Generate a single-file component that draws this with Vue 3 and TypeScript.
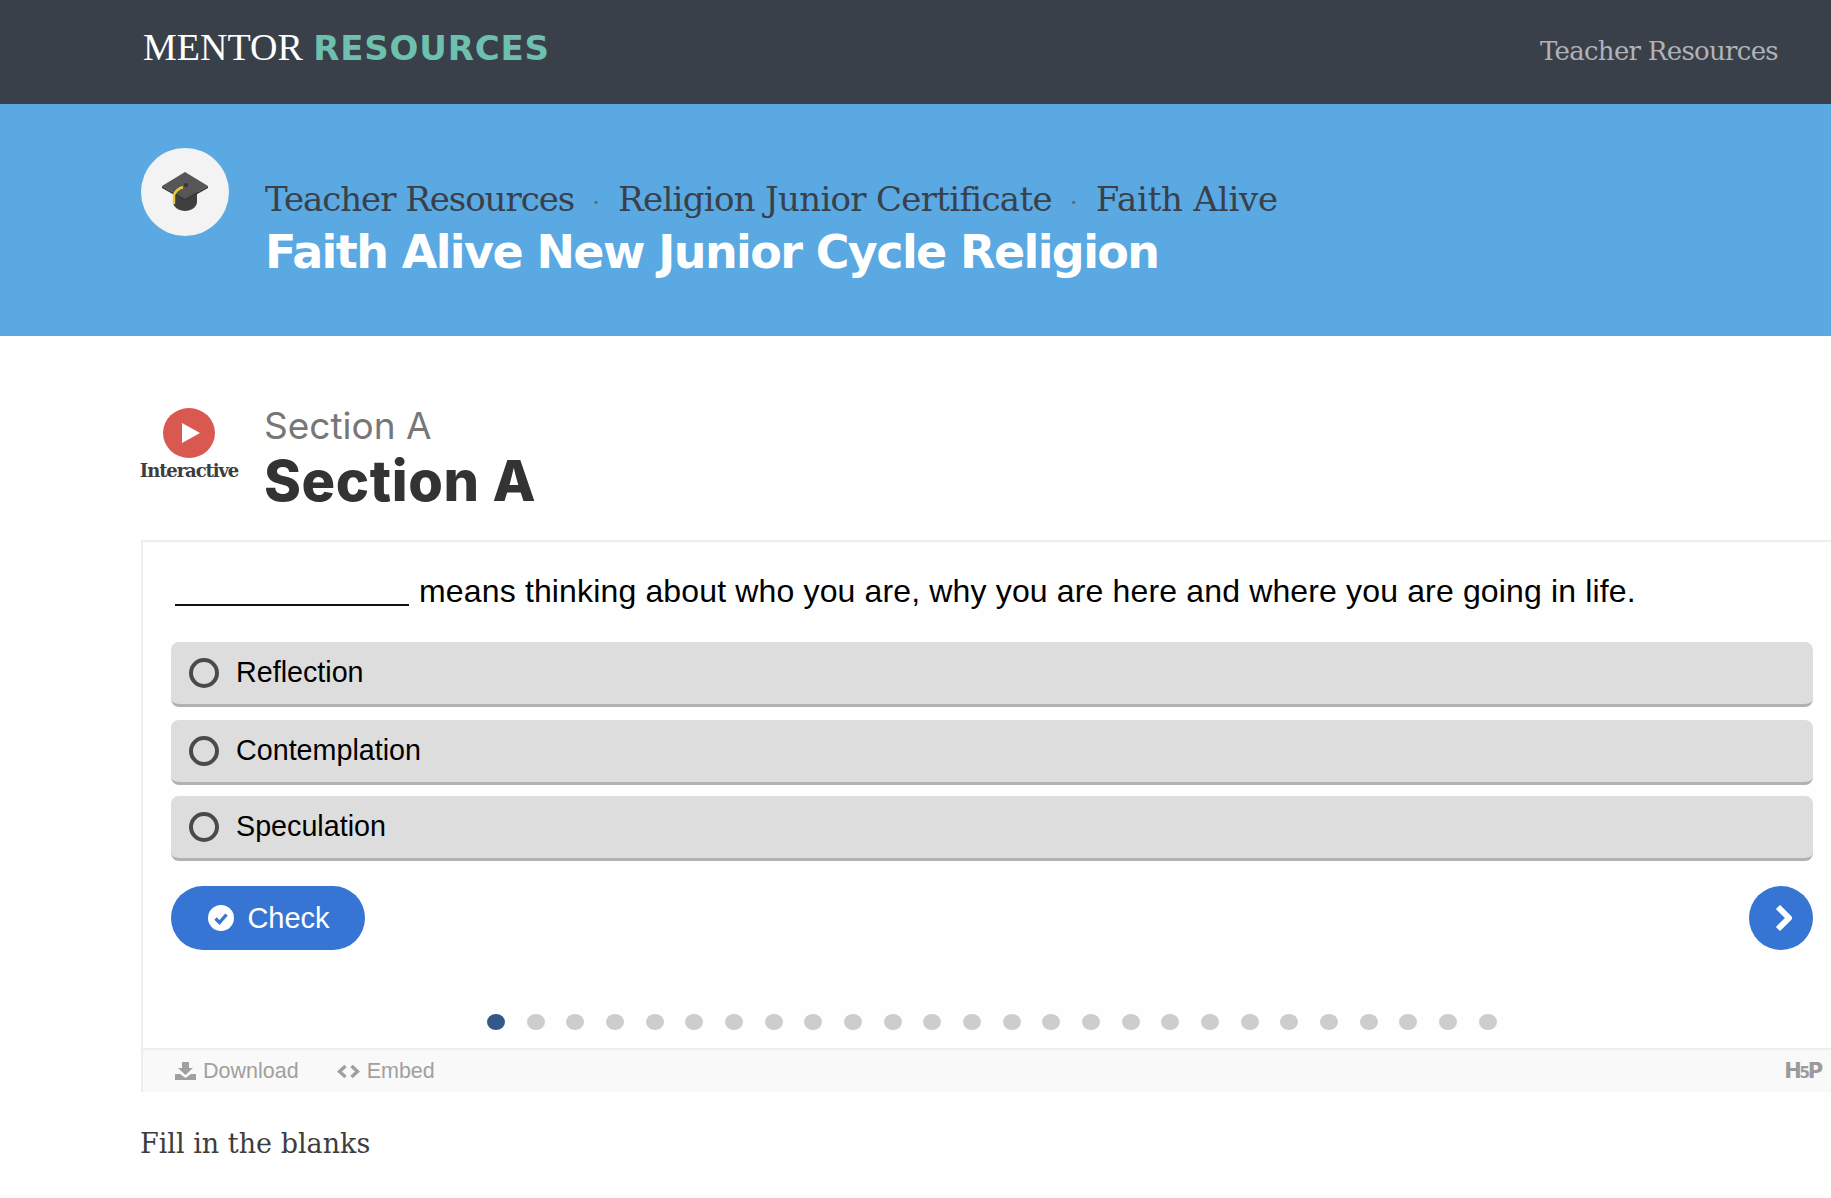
<script setup lang="ts">
const options: string[] = ['Reflection', 'Contemplation', 'Speculation']
const dots: number[] = Array.from({ length: 26 }, (_, i) => i)
</script>

<template>
  <div class="page">
    <header class="top">
      <div class="logo"><span class="mentor">MENTOR</span> <span class="res">RESOURCES</span></div>
      <a class="toplink">Teacher Resources</a>
    </header>
    <section class="hero">
      <div class="cap">
        <svg width="48" height="40" viewBox="0 0 48 40">
          <path d="M12 17v13c0 5 6 9 12 9s12-4 12-9V17z" fill="#3f3f3f" />
          <path d="M24 0 47 14 24 27 1 14z" fill="#565656" />
          <path d="M1 14 24 27 47 14v2L24 29 1 16z" fill="#3a3a3a" />
          <circle cx="25" cy="13" r="2" fill="#333" />
          <path d="M22 15c-6 2-8 5-9 8v9" fill="none" stroke="#e8c83f" stroke-width="2.400" />
        </svg>
      </div>
      <div class="hero-text">
        <div class="crumbs">
          <span class="c1">Teacher Resources</span><i>·</i><span class="c2">Religion Junior Certificate</span><i>·</i><span class="c3">Faith Alive</span>
        </div>
        <h1>Faith Alive New Junior Cycle Religion</h1>
      </div>
    </section>
    <main class="content">
      <div class="title-row">
        <div class="badge">
          <span class="play">
            <svg width="18" height="20" viewBox="0 0 18 20"><path d="M0 0 18 10 0 20z" fill="#fff" /></svg>
          </span>
          <span class="badge-label">Interactive</span>
        </div>
        <div class="titles">
          <div class="sub">Section A</div>
          <h2>Section A</h2>
        </div>
      </div>
      <div class="card">
        <div class="body">
          <p class="q"><span class="blank"></span> means thinking about who you are, why you are here and where you are going in life.</p>
          <div class="opts">
            <div v-for="o in options" :key="o" class="opt"><span class="radio"></span>{{ o }}</div>
          </div>
          <div class="actions">
            <button class="check">
              <svg width="26" height="26" viewBox="0 0 26 26">
                <circle cx="13" cy="13" r="13" fill="#fff" />
                <path d="M7.500 13.500 11.500 17.500 18.500 9.500" fill="none" stroke="#3775d4" stroke-width="3.400" />
              </svg>
              Check
            </button>
            <button class="next">
              <svg width="24" height="30" viewBox="0 0 24 30">
                <path d="M7 4 18 15 7 26" fill="none" stroke="#fff" stroke-width="6" stroke-linejoin="round" />
              </svg>
            </button>
          </div>
          <div class="dots">
            <span v-for="d in dots" :key="d" class="dot" :class="{ on: d === 0 }"></span>
          </div>
        </div>
        <div class="foot">
          <span class="foot-item">
            <svg width="21" height="18" viewBox="0 0 21 18">
              <path d="M7 0h7v6h4l-7.500 7L3 6h4z" fill="#a0a0a0" />
              <path d="M0 12h5l5.500 4 5.500-4h5v6H0z" fill="#a0a0a0" />
            </svg>
            Download
          </span>
          <span class="foot-item embed">
            <svg width="23" height="15" viewBox="0 0 23 15">
              <path d="M8.500 2 2.500 7.500 8.500 13M14.500 2l6 5.500-6 5.500" fill="none" stroke="#a0a0a0" stroke-width="3.400" />
            </svg>
            Embed
          </span>
          <span class="h5p">H<small>5</small>P</span>
        </div>
      </div>
      <p class="caption">Fill in the blanks</p>
    </main>
  </div>
</template>

<style scoped>
.page { width: 1831px; height: 1198px; overflow: hidden; background: #fff; }
.top {
  height: 104px; background: #3a4049; display: flex; align-items: center; justify-content: space-between;
  padding: 0 53px 10px 143px; box-sizing: border-box;
}
.logo { font-size: 38px; line-height: 1; white-space: nowrap; }
.mentor { font-family: "Liberation Serif", serif; color: #fff; }
.res { font-family: "DejaVu Sans", sans-serif; font-weight: 700; color: #6cc0ad; font-size: 34px; letter-spacing: 0.8px; margin-left: 1px; }
.toplink { font-family: "DejaVu Serif", serif; font-size: 26px; color: #b0b3b6; letter-spacing: -0.7px; margin-top: 8px; }
.hero {
  height: 232px; background: #5aa9e2; box-sizing: border-box; padding: 44px 0 0 141px; display: flex;
}
.cap {
  width: 88px; height: 88px; border-radius: 50%; background: #f3f3f3; display: flex; align-items: center; justify-content: center; flex: none;
}
.hero-text { margin-left: 36px; padding-top: 31px; }
.crumbs { font-family: "DejaVu Serif", serif; font-size: 34px; line-height: 40px; color: #3a4049; white-space: nowrap; }
.c1 { letter-spacing: -1.05px; }
.c2 { letter-spacing: -0.7px; }
.c3 { letter-spacing: -0.2px; }
.crumbs i { font-style: normal; display: inline-block; width: 44px; text-align: center; color: #666; font-size: 24px; }
h1 { margin: 0; font-family: "DejaVu Sans", sans-serif; font-weight: 700; font-size: 46px; line-height: 58px; color: #fff; letter-spacing: -1.6px; white-space: nowrap; }
.content { padding: 66px 0 0 141px; }
.title-row { display: flex; height: 138px; }
.badge { width: 98px; margin-left: -1px; display: flex; flex-direction: column; align-items: center; padding-top: 6px; flex: none; }
.play { width: 52px; height: 50px; border-radius: 50%; background: #d95850; display: flex; align-items: center; justify-content: center; padding-left: 3px; box-sizing: border-box; }
.badge-label { font-family: "DejaVu Serif", serif; font-weight: 700; font-size: 18px; line-height: 22px; margin-top: 2px; color: #3d3d3d; letter-spacing: -1.1px; }
.titles { margin-left: 26px; margin-top: 2px; }
.sub { font-family: "Inter", sans-serif; font-size: 37px; line-height: 44px; color: #777; letter-spacing: 0; }
h2 { margin: 0; font-family: "Inter", sans-serif; font-weight: 800; font-size: 56px; line-height: 66px; color: #333; white-space: nowrap; letter-spacing: 0.6px; }
.card { border: 2px solid #eee; border-width: 2px 0 0 2px; width: 1690px; box-sizing: border-box; }
.body { padding: 0 0 0 28px; background: #fefefe; height: 506px; box-sizing: border-box; position: relative; }
.q { margin: 0; padding: 29px 0 0 4px; height: 100px; box-sizing: border-box; font-family: "Liberation Sans", sans-serif; font-size: 32px; line-height: 40px; color: #000; white-space: nowrap; letter-spacing: 0.15px; }
.blank { display: inline-block; width: 234px; border-bottom: 2px solid #111; height: 31px; margin-right: 1px; vertical-align: -4px; }
.opts { display: flex; flex-direction: column; gap: 12px; width: 1642px; }
.opt {
  height: 65px; background: #dddddd; border-bottom: 3px solid #b1b1b1; border-radius: 8px; box-sizing: border-box;
  display: flex; align-items: center; font-family: "Liberation Sans", sans-serif; font-size: 28.700px; color: #000; padding-left: 18px; padding-bottom: 1px;
}
.opt:nth-child(2) { margin-top: 1px; margin-bottom: -1px; }
.radio { width: 30px; height: 30px; border: 4px solid #4a4a4a; border-radius: 50%; box-sizing: border-box; margin-right: 17px; flex: none; }
.actions { display: flex; justify-content: space-between; width: 1642px; margin-top: 25px; }
.check, .next { background: #3775d4; border: none; color: #fff; height: 64px; border-radius: 32px; display: flex; align-items: center; justify-content: center; padding: 0; }
.check { width: 194px; font-family: "Liberation Sans", sans-serif; font-size: 29px; gap: 13px; padding-left: 2px; box-sizing: border-box; }
.next { width: 64px; padding-left: 4px; box-sizing: border-box; }
.dots { display: flex; gap: 21.680px; padding-left: 316px; margin-top: 64px; }
.dot { width: 18px; height: 16px; border-radius: 50%; background: #cdcdcd; flex: none; }
.dot.on { background: #33588a; }
.foot {
  height: 44px; background: #f9f9f9; border-top: 2px solid #eee; box-sizing: border-box; display: flex; align-items: center;
  font-family: "Liberation Sans", sans-serif; font-size: 21.500px; color: #a0a0a0; padding-left: 32px; position: relative;
}
.foot-item { display: inline-flex; align-items: center; gap: 7px; }
.embed { margin-left: 38px; gap: 7px; }
.h5p { margin-left: auto; margin-right: 10px; font-family: "DejaVu Sans", sans-serif; font-weight: 700; font-size: 21px; letter-spacing: -2.200px; color: #9b9b9b; }
.h5p small { font-size: 15px; }
.caption { margin: 34px 0 0 -1px; font-family: "DejaVu Serif", serif; font-size: 27px; line-height: 36px; color: #3d3d3d; }
button { cursor: default; }
</style>
